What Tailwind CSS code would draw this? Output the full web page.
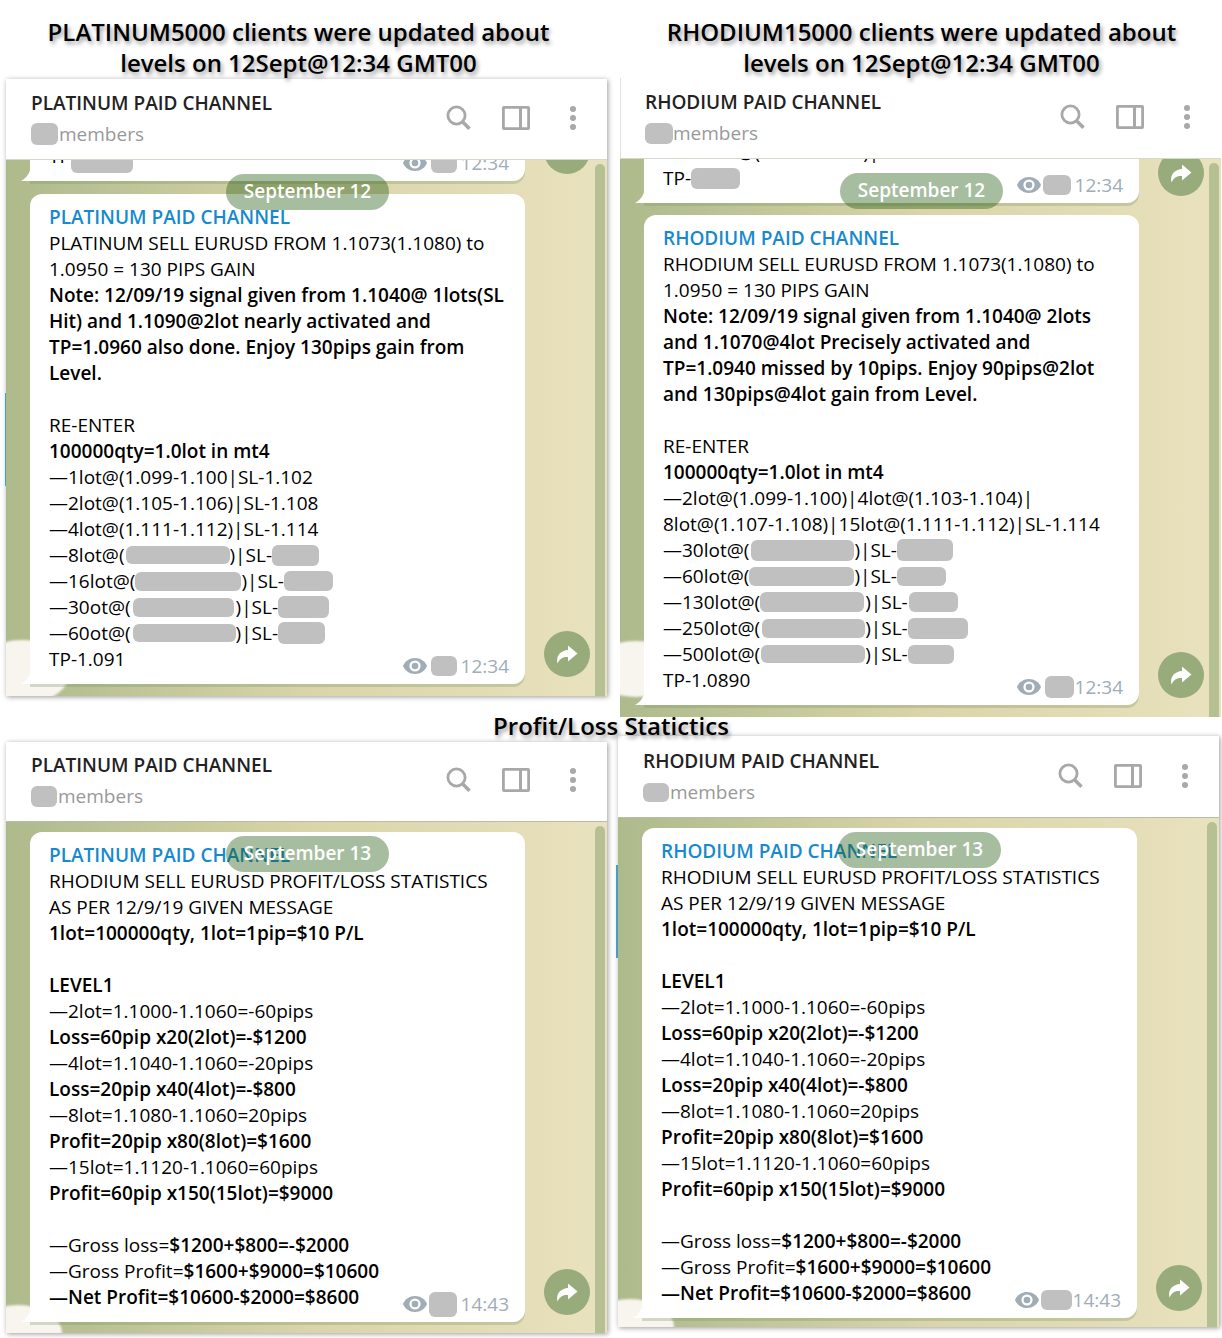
<!DOCTYPE html>
<html lang="en">
<head>
    <meta charset="UTF-8">
    <meta name="viewport" content="width=device-width, initial-scale=1.0">
    <title>Signal updates</title>
    <script src="https://cdn.jsdelivr.net/npm/@tailwindcss/browser@4"></script>
</head>
<body class="bg-white text-black font-['Open_Sans','Noto_Sans',sans-serif] text-[19px] leading-[26px]">

    <!-- Icons -->
    <svg class="hidden">
        <symbol id="search" viewBox="0 0 26 26"><circle cx="10.5" cy="10.5" r="8.6" fill="none" stroke="currentColor" stroke-width="2.8"/><path d="M16.5 16.8L23.5 23.8" stroke="currentColor" stroke-width="3.6"/></symbol>
        <symbol id="panel" viewBox="0 0 28 24"><path d="M2 1.4h24a.6.6 0 0 1 .6.6v20a.6.6 0 0 1-.6.6H2a.6.6 0 0 1-.6-.6V2a.6.6 0 0 1 .6-.6z" fill="none" stroke="currentColor" stroke-width="2.8"/><path d="M18.5 1v22" stroke="currentColor" stroke-width="3"/></symbol>
        <symbol id="dots" viewBox="0 0 6 24"><circle cx="3" cy="3" r="3" fill="currentColor"/><circle cx="3" cy="12" r="3" fill="currentColor"/><circle cx="3" cy="21" r="3" fill="currentColor"/></symbol>
        <symbol id="eye" viewBox="0 0 24 16"><path d="M12 0C6.500 0 2 3.200 0 8c2 4.800 6.500 8 12 8s10-3.200 12-8c-2-4.800-6.500-8-12-8z" fill="currentColor"/><circle cx="12" cy="8" r="5.600" fill="#fff"/><circle cx="12" cy="8" r="3.300" fill="currentColor"/></symbol>
        <symbol id="share" viewBox="0 0 22 19"><path d="M12 0.500L21.500 8.500L12 16.500V12C6.500 11.500 3.500 14 1.600 18.500C-0.500 11 4.500 5.500 12 5V0.500z" fill="currentColor"/></symbol>
        <symbol id="tail" viewBox="0 0 10 18"><path d="M10 0C10 8 7 14 0 18H10z" fill="#fff"/></symbol>
    </svg>

    <main>
        <section class="grid grid-cols-2 items-start gap-[13px] pt-4 pl-[6px] pr-px">

            <!-- Platinum, September 12 -->
            <div>
                <h2 class="relative z-10 mb-px pr-4 text-center text-2xl leading-[31px] font-semibold text-shadow-[2px_3px_4px_rgb(0_0_0/0.4)]">PLATINUM5000 clients were updated about<br>levels on 12Sept@12:34 GMT00</h2>
                <article class="relative bg-white shadow-[1px_1px_5px_rgb(0_0_0/0.4)]">
                    <span class="absolute -left-px top-[314px] h-[93px] w-px bg-[#4a9cc9]"></span>
                    <header class="flex items-center border-b border-[#d5d8cc] pt-[11px] pb-3 pl-[25px] pr-[31px] text-[#a8a8a8]">
                        <div class="flex-1">
                            <h3 class="mb-[5px] font-semibold text-[#222]">PLATINUM PAID CHANNEL</h3>
                            <p class="flex items-center text-[#999]"><span class="mr-px h-[22px] w-[27px] rounded-md bg-[#c0c0c0]"></span>members</p>
                        </div>
                        <button aria-label="Search" class="mr-[30px] pb-[2px]"><svg class="h-[26px] w-[26px]"><use href="#search"/></svg></button>
                        <button aria-label="Info" class="mr-10 pb-[2px]"><svg class="h-6 w-7"><use href="#panel"/></svg></button>
                        <button aria-label="More" class="pb-[2px]"><svg class="h-6 w-[6px]"><use href="#dots"/></svg></button>
                    </header>
                    <div class="relative overflow-hidden bg-linear-to-r from-[#adba8c] via-[#d9d4a9] to-[#e9e2be] pb-3 pl-6">
                        <span class="absolute -left-8 -bottom-2 h-16 w-[96px] rounded-[50%] bg-[#f8f5ef] blur-[1px]"></span>
                        <div class="mb-[13px] -mt-8 flex items-end">
                            <div class="relative w-[495px] rounded-xl rounded-bl-none bg-white px-[19px] pt-[10px] pb-3 shadow-[0_3px_0_rgb(120_150_100/0.3)]">
                                <svg class="absolute -left-[9px] bottom-0 h-[18px] w-[10px]"><use href="#tail"/></svg>
                                <p>TP</p>
                                <span class="absolute bottom-2 left-[41px] h-[17px] w-[62px] rounded-md bg-[#c0c0c0]"></span>
                                <div class="absolute bottom-[5px] right-4 flex items-center text-[#a0acb6]"><svg class="h-4 w-6"><use href="#eye"/></svg><span class="mx-1 h-5 w-[26px] rounded-md bg-[#c0c0c0]"></span>12:34</div>
                            </div>
                            <button aria-label="Share" class="mb-[7px] ml-[19px] flex size-[46px] items-center justify-center rounded-full bg-[#97ab7b] text-white"><svg class="h-[19px] w-[22px]"><use href="#share"/></svg></button>
                        </div>
                        <div class="flex items-end">
                            <div class="relative w-[495px] rounded-xl rounded-bl-none bg-white px-[19px] pt-[10px] pb-3 whitespace-nowrap shadow-[0_3px_0_rgb(120_150_100/0.3)]">
                                <svg class="absolute -left-[9px] bottom-0 h-[18px] w-[10px]"><use href="#tail"/></svg>
                                <h4 class="font-semibold text-[#168acd]">PLATINUM PAID CHANNEL</h4>
                                <p>PLATINUM SELL EURUSD FROM 1.1073(1.1080) to<br>1.0950 = 130 PIPS GAIN<br>
                                <b class="font-semibold">Note: 12/09/19 signal given from 1.1040@ 1lots(SL<br>Hit) and 1.1090@2lot nearly activated and<br>TP=1.0960 also done. Enjoy 130pips gain from<br>Level.</b><br><br>
                                RE-ENTER<br><b class="font-semibold">100000qty=1.0lot in mt4</b><br>
                                —1lot@(1.099-1.100|SL-1.102<br>—2lot@(1.105-1.106)|SL-1.108<br>—4lot@(1.111-1.112)|SL-1.114</p>
                                <p class="flex items-center">—8lot@(<span class="ml-px h-[18px] w-[104px] rounded-md bg-[#c0c0c0]"></span>)|SL-<span class="h-[21px] w-[47px] rounded-md bg-[#c0c0c0]"></span></p>
                                <p class="flex items-center">—16lot@(<span class="h-[19px] w-[106px] rounded-md bg-[#c0c0c0]"></span>)|SL-<span class="h-5 w-[49px] rounded-md bg-[#c0c0c0]"></span></p>
                                <p class="flex items-center">—30ot@(<span class="mx-[2px] h-[19px] w-[101px] rounded-md bg-[#c0c0c0]"></span>)|SL-<span class="h-[22px] w-[51px] rounded-md bg-[#c0c0c0]"></span></p>
                                <p class="flex items-center">—60ot@(<span class="ml-[2px] h-[18px] w-[103px] rounded-md bg-[#c0c0c0]"></span>)|SL-<span class="h-[22px] w-[47px] rounded-md bg-[#c0c0c0]"></span></p>
                                <p>TP-1.091</p>
                                <div class="absolute bottom-[5px] right-4 flex items-center text-[#a0acb6]"><svg class="h-4 w-6"><use href="#eye"/></svg><span class="mx-1 h-5 w-[26px] rounded-md bg-[#c0c0c0]"></span>12:34</div>
                            </div>
                            <button aria-label="Share" class="mb-[7px] ml-[19px] flex size-[46px] items-center justify-center rounded-full bg-[#97ab7b] text-white"><svg class="h-[19px] w-[22px]"><use href="#share"/></svg></button>
                        </div>
                        <div class="absolute inset-x-0 top-[14px] flex justify-center pl-[2px]"><span class="rounded-full bg-[rgb(35_90_18/0.4)] px-[18px] pt-1 pb-[6px] font-semibold text-white">September 12</span></div>
                        <span class="absolute top-1 right-[2px] bottom-0 w-[10px] rounded-t-full bg-[rgb(85_130_70/0.35)]"></span>
                    </div>
                </article>
            </div>

            <!-- Rhodium, September 12 -->
            <div>
                <h2 class="relative z-10 pl-[2px] text-center text-2xl leading-[31px] font-semibold text-shadow-[2px_3px_4px_rgb(0_0_0/0.4)]">RHODIUM15000 clients were updated about<br>levels on 12Sept@12:34 GMT00</h2>
                <article class="relative border-l border-[#e2e2e2] bg-white">
                    <header class="flex items-center border-b border-[#d5d8cc] pt-[11px] pb-3 pl-6 pr-[31px] text-[#a8a8a8]">
                        <div class="flex-1">
                            <h3 class="mb-[5px] font-semibold text-[#222]">RHODIUM PAID CHANNEL</h3>
                            <p class="flex items-center text-[#999]"><span class="h-[21px] w-7 rounded-md bg-[#c0c0c0]"></span>members</p>
                        </div>
                        <button aria-label="Search" class="mr-[30px] pb-[2px]"><svg class="h-[26px] w-[26px]"><use href="#search"/></svg></button>
                        <button aria-label="Info" class="mr-10 pb-[2px]"><svg class="h-6 w-7"><use href="#panel"/></svg></button>
                        <button aria-label="More" class="pb-[2px]"><svg class="h-6 w-[6px]"><use href="#dots"/></svg></button>
                    </header>
                    <div class="relative -ml-px overflow-hidden bg-linear-to-r from-[#adba8c] via-[#d9d4a9] to-[#e9e2be] pb-3 pl-6">
                        <span class="absolute -left-8 bottom-5 h-14 w-[96px] rounded-[50%] bg-[#f8f5ef] blur-[1px]"></span>
                        <div class="mb-3 -mt-[30px] flex items-end">
                            <div class="relative w-[495px] rounded-xl rounded-bl-none bg-white px-[19px] pt-[10px] pb-3 shadow-[0_3px_0_rgb(120_150_100/0.3)]">
                                <svg class="absolute -left-[9px] bottom-0 h-[18px] w-[10px]"><use href="#tail"/></svg>
                                <p>—600lot@(1.142-1.143)|SL-1.145</p>
                                <p class="flex items-center">TP-<span class="h-[21px] w-[49px] rounded-md bg-[#c0c0c0]"></span></p>
                                <div class="absolute bottom-[5px] right-4 flex items-center text-[#a0acb6]"><svg class="h-4 w-6"><use href="#eye"/></svg><span class="mr-1 ml-[2px] h-5 w-7 rounded-md bg-[#c0c0c0]"></span>12:34</div>
                            </div>
                            <button aria-label="Share" class="mb-[7px] ml-[19px] flex size-[46px] items-center justify-center rounded-full bg-[#97ab7b] text-white"><svg class="h-[19px] w-[22px]"><use href="#share"/></svg></button>
                        </div>
                        <div class="flex items-end">
                            <div class="relative w-[495px] rounded-xl rounded-bl-none bg-white px-[19px] pt-[10px] pb-3 whitespace-nowrap shadow-[0_3px_0_rgb(120_150_100/0.3)]">
                                <svg class="absolute -left-[9px] bottom-0 h-[18px] w-[10px]"><use href="#tail"/></svg>
                                <h4 class="font-semibold text-[#168acd]">RHODIUM PAID CHANNEL</h4>
                                <p>RHODIUM SELL EURUSD FROM 1.1073(1.1080) to<br>1.0950 = 130 PIPS GAIN<br>
                                <b class="font-semibold">Note: 12/09/19 signal given from 1.1040@ 2lots<br>and 1.1070@4lot Precisely activated and<br>TP=1.0940 missed by 10pips. Enjoy 90pips@2lot<br>and 130pips@4lot gain from Level.</b><br><br>
                                RE-ENTER<br><b class="font-semibold">100000qty=1.0lot in mt4</b><br>
                                —2lot@(1.099-1.100)|4lot@(1.103-1.104)|<br>8lot@(1.107-1.108)|15lot@(1.111-1.112)|SL-1.114</p>
                                <p class="flex items-center">—30lot@(<span class="ml-[2px] h-[21px] w-[103px] rounded-md bg-[#c0c0c0]"></span>)|SL-<span class="h-[22px] w-14 rounded-md bg-[#c0c0c0]"></span></p>
                                <p class="flex items-center">—60lot@(<span class="h-[19px] w-[105px] rounded-md bg-[#c0c0c0]"></span>)|SL-<span class="h-[19px] w-[49px] rounded-md bg-[#c0c0c0]"></span></p>
                                <p class="flex items-center">—130lot@(<span class="mr-px h-5 w-[104px] rounded-md bg-[#c0c0c0]"></span>)|SL-<span class="ml-px h-5 w-[49px] rounded-md bg-[#c0c0c0]"></span></p>
                                <p class="flex items-center">—250lot@(<span class="ml-[2px] h-[19px] w-[103px] rounded-md bg-[#c0c0c0]"></span>)|SL-<span class="h-[21px] w-[60px] rounded-md bg-[#c0c0c0]"></span></p>
                                <p class="flex items-center">—500lot@(<span class="ml-px h-[18px] w-[104px] rounded-md bg-[#c0c0c0]"></span>)|SL-<span class="h-[19px] w-[46px] rounded-md bg-[#c0c0c0]"></span></p>
                                <p>TP-1.0890</p>
                                <div class="absolute bottom-[5px] right-4 flex items-center text-[#a0acb6]"><svg class="h-4 w-6"><use href="#eye"/></svg><span class="ml-1 mr-px h-[22px] w-[29px] rounded-md bg-[#c0c0c0]"></span>12:34</div>
                            </div>
                            <button aria-label="Share" class="mb-[7px] ml-[19px] flex size-[46px] items-center justify-center rounded-full bg-[#97ab7b] text-white"><svg class="h-[19px] w-[22px]"><use href="#share"/></svg></button>
                        </div>
                        <div class="absolute inset-x-0 top-[14px] flex justify-center pl-[2px]"><span class="rounded-full bg-[rgb(35_90_18/0.4)] px-[18px] pt-1 pb-[6px] font-semibold text-white">September 12</span></div>
                        <span class="absolute top-1 right-[2px] bottom-0 w-[10px] rounded-t-full bg-[rgb(85_130_70/0.35)]"></span>
                    </div>
                </article>
            </div>
        </section>

        <h2 class="relative z-10 -mt-[7px] -mb-[5px] text-center text-2xl leading-[31px] font-semibold text-shadow-[2px_3px_4px_rgb(0_0_0/0.4)]">Profit/Loss Statictics</h2>

        <section class="grid grid-cols-2 items-start gap-[11px] pb-[11px] pl-[6px] pr-[3px]">

            <!-- Platinum, September 13 -->
            <article class="relative mt-[6px] bg-white shadow-[1px_1px_5px_rgb(0_0_0/0.4)]">
                <header class="flex items-center border-b border-[#b9bda6] pt-[10px] pb-3 pl-[25px] pr-[31px] text-[#a8a8a8]">
                    <div class="flex-1">
                        <h3 class="mb-[5px] font-semibold text-[#222]">PLATINUM PAID CHANNEL</h3>
                        <p class="flex items-center text-[#999]"><span class="mr-px h-[21px] w-[26px] rounded-md bg-[#c0c0c0]"></span>members</p>
                    </div>
                    <button aria-label="Search" class="mr-[30px] pb-[2px]"><svg class="h-[26px] w-[26px]"><use href="#search"/></svg></button>
                    <button aria-label="Info" class="mr-10 pb-[2px]"><svg class="h-6 w-7"><use href="#panel"/></svg></button>
                    <button aria-label="More" class="pb-[2px]"><svg class="h-6 w-[6px]"><use href="#dots"/></svg></button>
                </header>
                <div class="relative overflow-hidden bg-linear-to-r from-[#adba8c] via-[#d9d4a9] to-[#e9e2be] pt-[10px] pb-[11px] pl-6">
                    <span class="absolute -left-8 -bottom-7 h-14 w-[88px] rounded-[50%] bg-[#f8f5ef] blur-[1px]"></span>
                    <div class="flex items-end">
                        <div class="relative w-[495px] rounded-xl rounded-bl-none bg-white px-[19px] pt-[10px] pb-3 whitespace-nowrap shadow-[0_3px_0_rgb(120_150_100/0.3)]">
                            <svg class="absolute -left-[9px] bottom-0 h-[18px] w-[10px]"><use href="#tail"/></svg>
                            <h4 class="font-semibold text-[#168acd]">PLATINUM PAID CHANNEL</h4>
                            <p>RHODIUM SELL EURUSD PROFIT/LOSS STATISTICS<br>AS PER 12/9/19 GIVEN MESSAGE<br>
                            <b class="font-semibold">1lot=100000qty, 1lot=1pip=$10 P/L<br><br>LEVEL1</b><br>
                            —2lot=1.1000-1.1060=-60pips<br><b class="font-semibold">Loss=60pip x20(2lot)=-$1200</b><br>
                            —4lot=1.1040-1.1060=-20pips<br><b class="font-semibold">Loss=20pip x40(4lot)=-$800</b><br>
                            —8lot=1.1080-1.1060=20pips<br><b class="font-semibold">Profit=20pip x80(8lot)=$1600</b><br>
                            —15lot=1.1120-1.1060=60pips<br><b class="font-semibold">Profit=60pip x150(15lot)=$9000</b><br><br>
                            —Gross loss=<b class="font-semibold">$1200+$800=-$2000</b><br>
                            —Gross Profit=<b class="font-semibold">$1600+$9000=$10600</b><br>
                            <b class="font-semibold">—Net Profit=$10600-$2000=$8600</b></p>
                            <div class="absolute bottom-[5px] right-4 flex items-center text-[#a0acb6]"><svg class="h-4 w-6"><use href="#eye"/></svg><span class="ml-[2px] mr-1 h-[25px] w-7 rounded-md bg-[#c0c0c0]"></span>14:43</div>
                        </div>
                        <button aria-label="Share" class="mb-[7px] ml-[19px] flex size-[46px] items-center justify-center rounded-full bg-[#97ab7b] text-white"><svg class="h-[19px] w-[22px]"><use href="#share"/></svg></button>
                    </div>
                    <div class="absolute inset-x-0 top-[14px] flex justify-center pl-[2px]"><span class="rounded-full bg-[rgb(35_90_18/0.4)] px-[18px] pt-1 pb-[6px] font-semibold text-white">September 13</span></div>
                    <span class="absolute top-1 right-[2px] bottom-0 w-[10px] rounded-t-full bg-[rgb(85_130_70/0.35)]"></span>
                </div>
            </article>

            <!-- Rhodium, September 13 -->
            <article class="relative bg-white shadow-[1px_1px_5px_rgb(0_0_0/0.4)]">
                <span class="absolute -left-[2px] top-[129px] h-[93px] w-[2px] bg-[#4a9cc9]"></span>
                <header class="flex items-center border-b border-[#b9bda6] pt-3 pb-3 pl-[25px] pr-[31px] text-[#a8a8a8]">
                    <div class="flex-1">
                        <h3 class="mb-[5px] font-semibold text-[#222]">RHODIUM PAID CHANNEL</h3>
                        <p class="flex items-center text-[#999]"><span class="mr-px h-[19px] w-[26px] rounded-md bg-[#c0c0c0]"></span>members</p>
                    </div>
                    <button aria-label="Search" class="mr-[30px] pb-[2px]"><svg class="h-[26px] w-[26px]"><use href="#search"/></svg></button>
                    <button aria-label="Info" class="mr-10 pb-[2px]"><svg class="h-6 w-7"><use href="#panel"/></svg></button>
                    <button aria-label="More" class="pb-[2px]"><svg class="h-6 w-[6px]"><use href="#dots"/></svg></button>
                </header>
                <div class="relative overflow-hidden bg-linear-to-r from-[#adba8c] via-[#d9d4a9] to-[#e9e2be] pt-[10px] pb-[9px] pl-6">
                    <span class="absolute -left-8 -bottom-7 h-14 w-[88px] rounded-[50%] bg-[#f8f5ef] blur-[1px]"></span>
                    <div class="flex items-end">
                        <div class="relative w-[495px] rounded-xl rounded-bl-none bg-white px-[19px] pt-[10px] pb-3 whitespace-nowrap shadow-[0_3px_0_rgb(120_150_100/0.3)]">
                            <svg class="absolute -left-[9px] bottom-0 h-[18px] w-[10px]"><use href="#tail"/></svg>
                            <h4 class="font-semibold text-[#168acd]">RHODIUM PAID CHANNEL</h4>
                            <p>RHODIUM SELL EURUSD PROFIT/LOSS STATISTICS<br>AS PER 12/9/19 GIVEN MESSAGE<br>
                            <b class="font-semibold">1lot=100000qty, 1lot=1pip=$10 P/L<br><br>LEVEL1</b><br>
                            —2lot=1.1000-1.1060=-60pips<br><b class="font-semibold">Loss=60pip x20(2lot)=-$1200</b><br>
                            —4lot=1.1040-1.1060=-20pips<br><b class="font-semibold">Loss=20pip x40(4lot)=-$800</b><br>
                            —8lot=1.1080-1.1060=20pips<br><b class="font-semibold">Profit=20pip x80(8lot)=$1600</b><br>
                            —15lot=1.1120-1.1060=60pips<br><b class="font-semibold">Profit=60pip x150(15lot)=$9000</b><br><br>
                            —Gross loss=<b class="font-semibold">$1200+$800=-$2000</b><br>
                            —Gross Profit=<b class="font-semibold">$1600+$9000=$10600</b><br>
                            <b class="font-semibold">—Net Profit=$10600-$2000=$8600</b></p>
                            <div class="absolute bottom-[5px] right-4 flex items-center text-[#a0acb6]"><svg class="h-4 w-6"><use href="#eye"/></svg><span class="ml-[2px] mr-px h-5 w-[31px] rounded-md bg-[#c0c0c0]"></span>14:43</div>
                        </div>
                        <button aria-label="Share" class="mb-[7px] ml-[19px] flex size-[46px] items-center justify-center rounded-full bg-[#97ab7b] text-white"><svg class="h-[19px] w-[22px]"><use href="#share"/></svg></button>
                    </div>
                    <div class="absolute inset-x-0 top-[14px] flex justify-center pl-[2px]"><span class="rounded-full bg-[rgb(35_90_18/0.4)] px-[18px] pt-1 pb-[6px] font-semibold text-white">September 13</span></div>
                    <span class="absolute top-1 right-[2px] bottom-0 w-[10px] rounded-t-full bg-[rgb(85_130_70/0.35)]"></span>
                </div>
            </article>
        </section>
    </main>

</body>
</html>
